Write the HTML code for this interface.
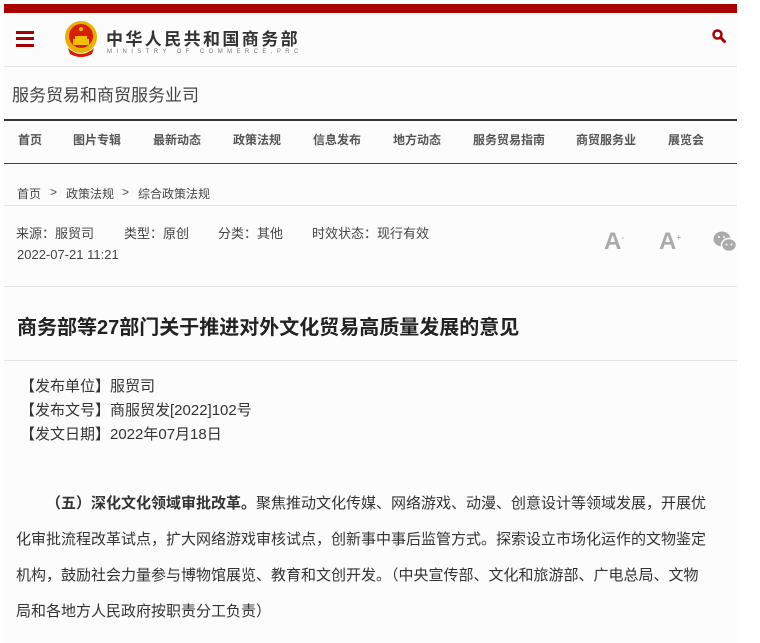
<!DOCTYPE html>
<html><head><meta charset="utf-8"><style>
*{margin:0;padding:0;box-sizing:border-box}
body{width:760px;height:643px;background:#fff;font-family:"Liberation Sans","Noto Sans CJK SC",sans-serif;color:#333;position:relative;overflow:hidden}
.wrap{position:absolute;left:4px;top:0;width:733px;height:643px;background:#fcfcfd}
.abs{position:absolute;white-space:nowrap}
.line{position:absolute;left:0;width:733px;height:1px;background:#e4e4e6}
.nav span{position:absolute;top:131px;font-size:12px;font-weight:bold;color:#555}
.body div{position:absolute;left:12px;font-size:15px;color:#333;white-space:nowrap}
.m{position:absolute;top:223px;font-size:13px;color:#444;white-space:nowrap}
.bc{position:absolute;top:185px;font-size:12px;color:#444;white-space:nowrap}
</style></head><body>
<div class="wrap">
 <div class="abs" style="left:0;top:4px;width:733px;height:9px;background:#a80000"></div>
 <div class="abs" style="left:12px;top:31px;width:18px;height:3px;background:#a80000"></div>
 <div class="abs" style="left:12px;top:37px;width:18px;height:3px;background:#a80000"></div>
 <div class="abs" style="left:12px;top:44px;width:18px;height:3px;background:#a80000"></div>
 <svg class="abs" style="left:60px;top:20px" width="34" height="38" viewBox="0 0 34 38">
  <circle cx="17" cy="17" r="16" fill="#e8b000"/>
  <circle cx="17" cy="16" r="12" fill="#d81e06"/>
  <rect x="9" y="19" width="16" height="6" fill="#f0c000"/>
  <rect x="11" y="16" width="12" height="3" fill="#f0c000"/>
  <circle cx="17" cy="9" r="2" fill="#f0c000"/>
  <path d="M4 28 Q17 40 30 28 L28 34 Q17 40 6 34Z" fill="#d81e06"/>
 </svg>
 <div class="abs" style="left:102px;top:25px;font-size:17px;color:#333;letter-spacing:2.4px;font-weight:bold">中华人民共和国商务部</div>
 <div class="abs" style="left:103px;top:49px;font-size:6px;color:#777;letter-spacing:4.4px">MINISTRY OF COMMERCE,PRC</div>
 <svg class="abs" style="left:708px;top:29px" width="14" height="14" viewBox="0 0 14 14"><circle cx="5.5" cy="5.5" r="4" fill="none" stroke="#a80000" stroke-width="2.5"/><path d="M8.5 8.5L12.5 12.5" stroke="#a80000" stroke-width="3" stroke-linecap="round"/></svg>
 <div class="line" style="top:66px"></div>
 <div class="abs" style="left:8px;top:81px;font-size:17px;color:#444">服务贸易和商贸服务业司</div>
 <div class="abs" style="left:0;top:119px;width:733px;height:2px;background:#333"></div>
 <div class="abs" style="left:0;top:163px;width:733px;height:1px;background:#444"></div>
 <div class="nav">
  <span style="left:14px">首页</span><span style="left:69px">图片专辑</span><span style="left:149px">最新动态</span><span style="left:229px">政策法规</span><span style="left:309px">信息发布</span><span style="left:389px">地方动态</span><span style="left:469px">服务贸易指南</span><span style="left:572px">商贸服务业</span><span style="left:664px">展览会</span>
 </div>
 <span class="bc" style="left:13px">首页</span><span class="bc" style="left:46px">&gt;</span><span class="bc" style="left:62px">政策法规</span><span class="bc" style="left:118px">&gt;</span><span class="bc" style="left:134px">综合政策法规</span>
 <div class="line" style="top:205px"></div>
 <span class="m" style="left:12px">来源：服贸司</span><span class="m" style="left:120px">类型：原创</span><span class="m" style="left:214px">分类：其他</span><span class="m" style="left:308px">时效状态：现行有效</span>
 <div class="abs" style="left:13px;top:247px;font-size:13px;color:#444">2022-07-21 11:21</div>
 <div class="abs" style="left:600px;top:228px;font-size:24px;font-weight:bold;color:#aaa">A<sup style="font-size:8px">-</sup></div>
 <div class="abs" style="left:655px;top:228px;font-size:24px;font-weight:bold;color:#aaa">A<sup style="font-size:8px">+</sup></div>
 <svg class="abs" style="left:709px;top:230px" width="24" height="24" viewBox="0 0 24 24"><ellipse cx="9" cy="9" rx="8.5" ry="7.5" fill="#aaa"/><ellipse cx="16" cy="15" rx="7.5" ry="6.5" fill="#aaa" stroke="#fcfcfd" stroke-width="1.5"/><circle cx="13.5" cy="14.5" r="1" fill="#fff"/><circle cx="18.5" cy="14.5" r="1" fill="#fff"/><circle cx="6" cy="7" r="1" fill="#fff"/><circle cx="11" cy="7" r="1" fill="#fff"/></svg>
 <div class="line" style="top:286px"></div>
 <div class="abs" style="left:13px;top:311px;font-size:20px;font-weight:bold;color:#222">商务部等27部门关于推进对外文化贸易高质量发展的意见</div>
 <div class="line" style="top:360px"></div>
 <div class="abs" style="left:16px;top:375px;font-size:15px;line-height:24px;color:#333">【发布单位】服贸司<br>【发布文号】商服贸发[2022]102号<br>【发文日期】2022年07月18日</div>
 <div class="body">
  <div style="top:492px;left:42px"><b>（五）深化文化领域审批改革。</b>聚焦推动文化传媒、网络游戏、动漫、创意设计等领域发展，开展优</div>
  <div style="top:528px">化审批流程改革试点，扩大网络游戏审核试点，创新事中事后监管方式。探索设立市场化运作的文物鉴定</div>
  <div style="top:564px">机构，鼓励社会力量参与博物馆展览、教育和文创开发。（中央宣传部、文化和旅游部、广电总局、文物</div>
  <div style="top:600px">局和各地方人民政府按职责分工负责）</div>
 </div>
</div>
</body></html>
